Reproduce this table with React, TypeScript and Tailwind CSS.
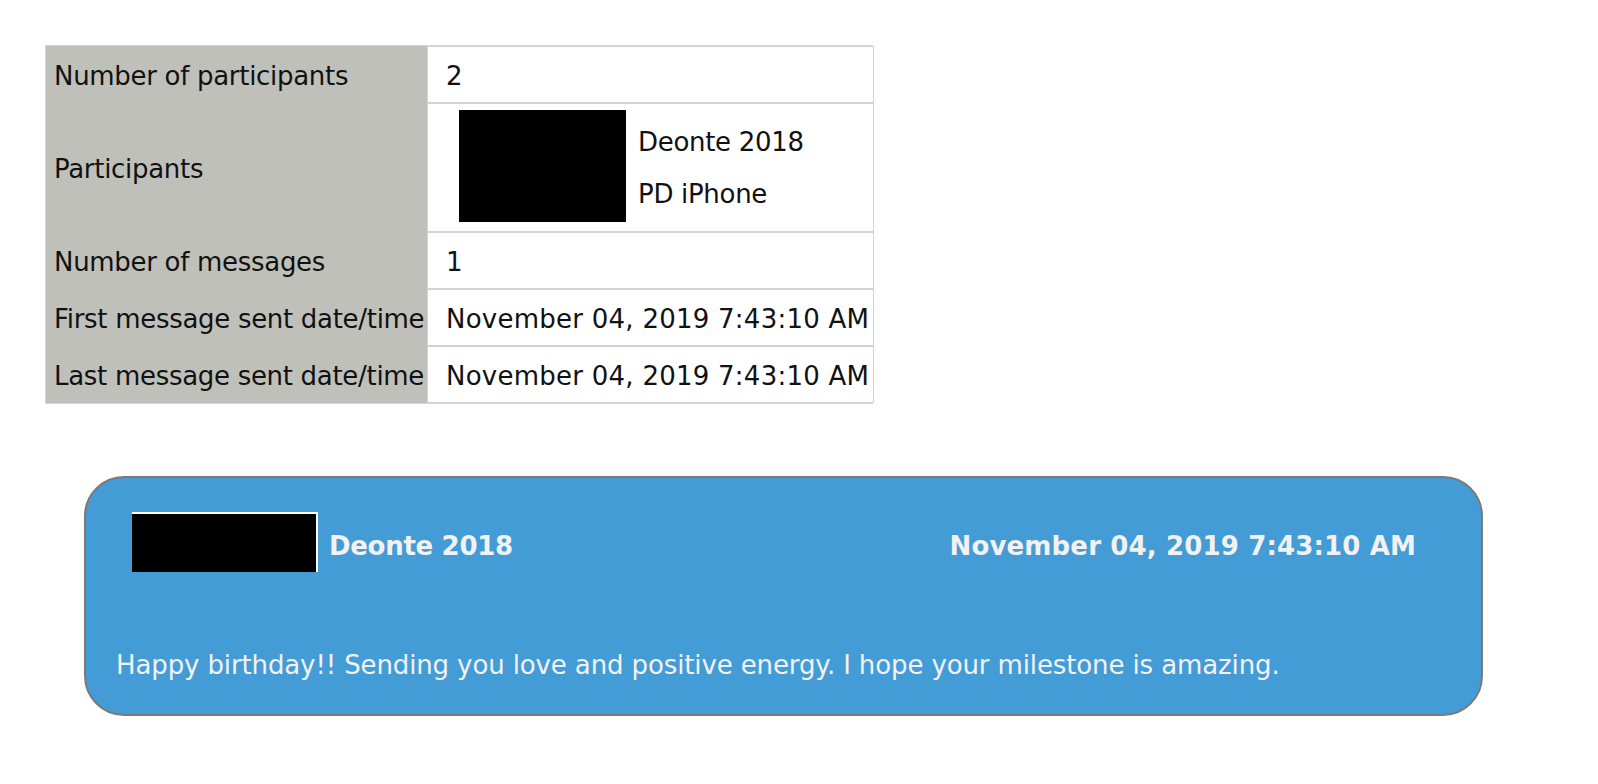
const rows: { label: string; value: string }[] = [
  { label: "Number of messages", value: "1" },
  { label: "First message sent date/time", value: "November 04, 2019 7:43:10 AM" },
  { label: "Last message sent date/time", value: "November 04, 2019 7:43:10 AM" },
];

function Label({ children }: { children: React.ReactNode }) {
  return <div className="flex items-center pl-2 pt-[3px] text-[#111]">{children}</div>;
}

function Value({ children, className = "" }: { children: React.ReactNode; className?: string }) {
  return (
    <div className={`flex items-center border border-[#d3d3d3] bg-white pl-[18px] pt-[3px] text-[#111] ${className}`}>
      {children}
    </div>
  );
}

export default function App() {
  return (
    <div
      className="min-h-screen bg-white pl-[45px] pt-[45px] text-[26px] leading-none tracking-[-0.3px]"
      style={{ fontFamily: '"DejaVu Sans", sans-serif' }}
    >
      <div className="grid w-[828px] grid-cols-[381px_447px] grid-rows-[57px_129px_57px_57px_57px] border border-[#d6d6d6] bg-[#c0c0bb]">
        <Label>Number of participants</Label>
        <Value>2</Value>

        <Label>Participants</Label>
        <Value className="gap-3 !pt-0 pl-[31px]">
          <div className="mb-[4px] h-[112px] w-[167px] bg-black" />
          <div className="flex flex-col gap-[26px]">
            <span>Deonte 2018</span>
            <span>PD iPhone</span>
          </div>
        </Value>

        {rows.map((r) => (
          <div key={r.label} className="contents">
            <Label>{r.label}</Label>
            <Value className="tracking-[0.25px]">{r.value}</Value>
          </div>
        ))}
      </div>

      <div className="ml-[39px] mt-[72px] w-[1399px] rounded-[40px] border-2 border-[#7a7a7a] bg-[#449cd6] pb-[33px] pl-[30px] pr-[65px] pt-[34px] text-[#f2f2f2]">
        <div className="flex items-center pl-[16px]">
          <div className="h-[60px] w-[186px] border-t-2 border-r-2 border-white bg-black" />
          <span className="ml-[11px] pt-[7px] font-bold">Deonte 2018</span>
          <span className="ml-auto pt-[7px] font-bold tracking-[0.15px]">November 04, 2019 7:43:10 AM</span>
        </div>
        <p className="mt-[77px] leading-[32px] tracking-[-0.12px]">
          Happy birthday!! Sending you love and positive energy. I hope your milestone is amazing.
        </p>
      </div>
    </div>
  );
}
